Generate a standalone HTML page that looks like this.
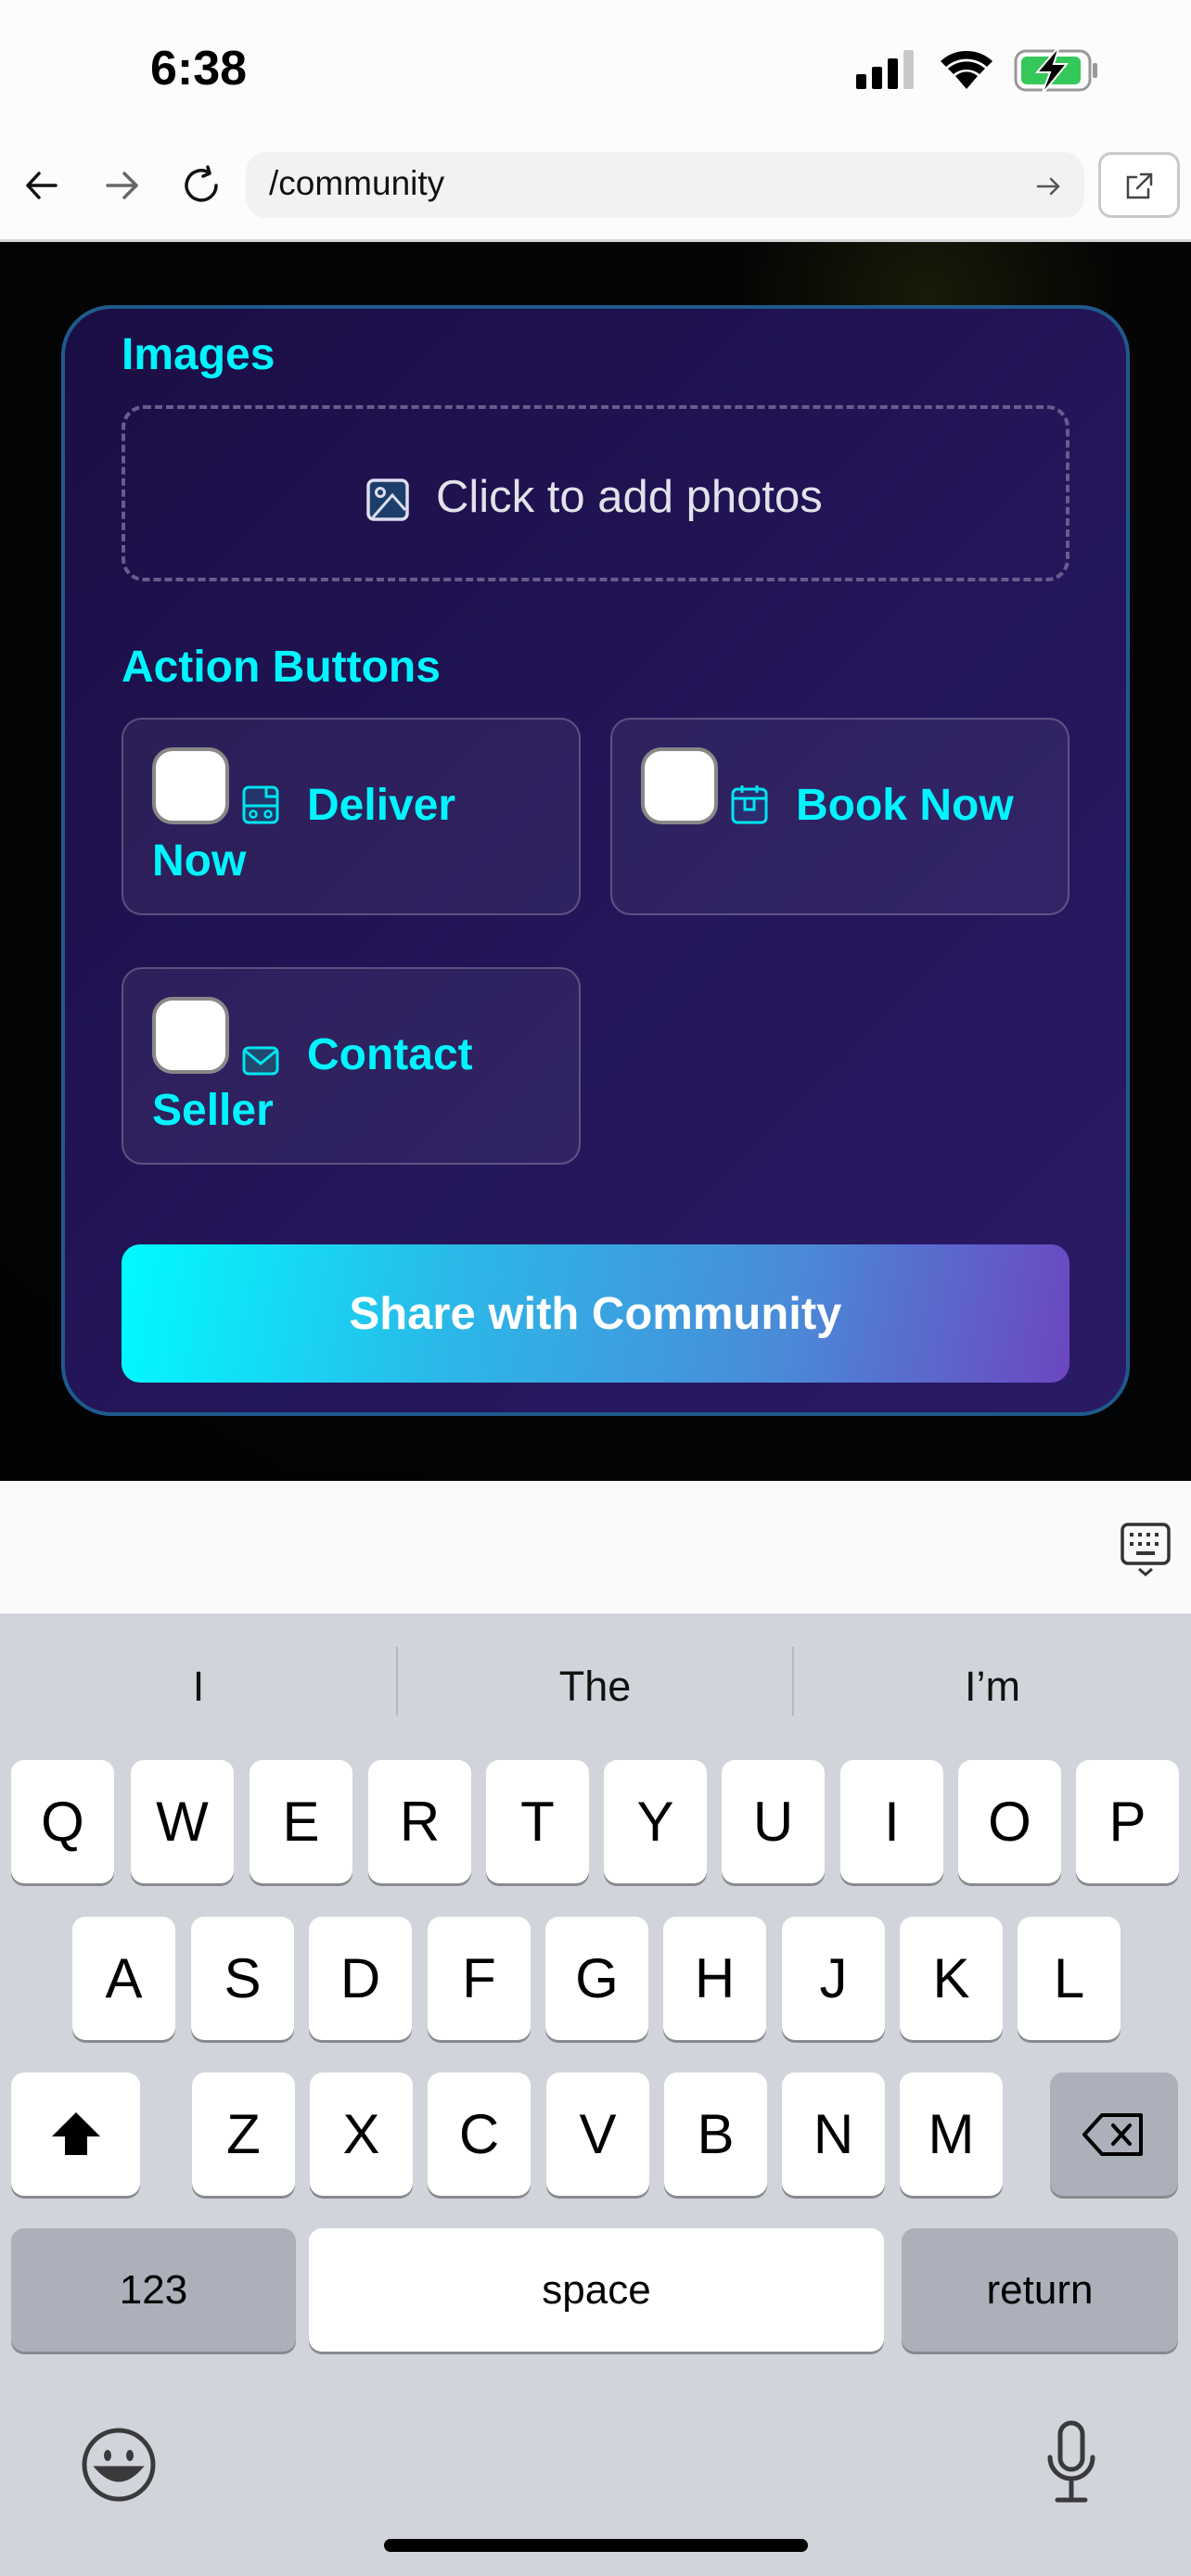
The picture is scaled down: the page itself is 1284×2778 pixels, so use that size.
<!DOCTYPE html>
<html><head><meta charset="utf-8"><style>
*{margin:0;padding:0;box-sizing:border-box}
body{width:1284px;height:2778px;position:relative;overflow:hidden;font-family:"Liberation Sans",sans-serif;background:#fcfcfc}
.a{position:absolute}
.key{position:absolute;background:#fff;border-radius:14px;box-shadow:0 3px 0 #898a8e;display:flex;align-items:center;justify-content:center;font-size:60px;color:#000;height:133px;width:111px}
.dk{background:#abb0ba}
.card{left:66px;top:329px;width:1152px;height:1198px;border:4px solid #1f5a8c;border-radius:54px;background:linear-gradient(135deg,#1b0e44 0%,#231557 50%,#2a1a66 100%)}
.cy{color:#00f5ff;font-weight:bold}
.btn{position:absolute;border:2px solid rgba(255,255,255,0.22);border-radius:22px;background:rgba(255,255,255,0.06);width:495px;height:213px}
.cb{position:absolute;left:31px;top:30px;width:83px;height:83px;background:#fff;border:4px solid #888;border-radius:22px}
.bt{position:absolute;font-size:48px;font-weight:bold;color:#00f5ff;line-height:60px}
</style></head><body>
<!-- status -->
<div class="a" style="left:162px;top:44px;font-size:52px;font-weight:bold;color:#000">6:38</div>
<svg class="a" style="left:920px;top:50px" width="280" height="52" viewBox="0 0 280 52">
<rect x="3" y="30" width="11" height="16" rx="2" fill="#000"/><rect x="20" y="22" width="11" height="24" rx="2" fill="#000"/><rect x="37" y="13" width="11" height="33" rx="2" fill="#000"/><rect x="54" y="4" width="11" height="42" rx="2" fill="#c8c8c8"/>
<path d="M122 46 L110 32 A18 18 0 0 1 134 32 Z" fill="#000"/><path d="M102 24 A30 30 0 0 1 142 24 L136 30 A22 22 0 0 0 108 30 Z" fill="#000"/><path d="M94 16 A41 41 0 0 1 150 16 L144 22 A33 33 0 0 0 100 22 Z" fill="#000"/>
<rect x="175" y="5" width="80" height="42" rx="11" fill="none" stroke="#999" stroke-width="3"/><rect x="181" y="11" width="64" height="30" rx="6" fill="#34c759"/><rect x="258" y="18" width="5" height="16" rx="2" fill="#999"/>
<path d="M222 0 L198 28 L212 28 L203 52 L230 19 L216 19 Z" fill="#000" stroke="#fcfcfc" stroke-width="2"/>
</svg>
<!-- browser bar -->
<svg class="a" style="left:20px;top:178px" width="230" height="44" viewBox="0 0 230 44" fill="none" stroke-width="3.5" stroke-linecap="round" stroke-linejoin="round">
<path d="M40 22 H12 M22 9 L10 22 L22 35" stroke="#111"/>
<path d="M96 22 H126 M114 9 L127 22 L114 35" stroke="#666"/>
<path d="M213 22 A16 16 0 1 1 205 8 M204 2 L206 9 L199 12" stroke="#111"/>
</svg>
<div class="a" style="left:265px;top:164px;width:904px;height:71px;background:#f1f2f4;border-radius:22px"></div>
<div class="a" style="left:290px;top:177px;font-size:37px;color:#111">/community</div>
<svg class="a" style="left:1115px;top:187px" width="30" height="28" viewBox="0 0 30 28" fill="none" stroke="#555" stroke-width="2.5" stroke-linecap="round"><path d="M4 14 H26 M18 6 L26 14 L18 22"/></svg>
<div class="a" style="left:1184px;top:164px;width:88px;height:71px;border:3px solid #c9c9c9;border-radius:14px;background:#fff"></div>
<svg class="a" style="left:1210px;top:183px" width="36" height="36" viewBox="0 0 36 36" fill="none" stroke="#444" stroke-width="2.5" stroke-linecap="round"><path d="M15 8 H6 V30 H28 V21 M20 5 H31 V16 M31 5 L16 20"/></svg>
<div class="a" style="left:0;top:258px;width:1284px;height:3px;background:#d6d6d6"></div>
<!-- page -->
<div class="a" style="left:0;top:261px;width:1284px;height:1336px;background:radial-gradient(circle at 1000px 60px,#1a1a08 0,#050505 200px,#020305 100%)"></div>
<div class="a card">
 <div class="a cy" style="left:61px;top:22px;font-size:48px">Images</div>
 <div class="a" style="left:61px;top:104px;width:1022px;height:190px;border:4px dashed #675c8c;border-radius:24px"></div>
 <svg class="a" style="left:325px;top:183px" width="46" height="46" viewBox="0 0 46 46"><rect x="2" y="2" width="42" height="42" rx="6" fill="#1d3d6a" stroke="#dde" stroke-width="3.5"/><circle cx="15" cy="15" r="4.5" fill="none" stroke="#dde" stroke-width="3"/><path d="M7 42 L28 18 L42 34" fill="none" stroke="#dde" stroke-width="3"/></svg>
 <div class="a" style="left:400px;top:175px;font-size:49px;color:#e2e2ea">Click to add photos</div>
 <div class="a cy" style="left:61px;top:359px;font-size:48px">Action Buttons</div>
 <div class="btn" style="left:61px;top:441px"><div class="cb"></div>
  <svg class="a" style="left:128px;top:71px" width="40" height="42" viewBox="0 0 40 42"><rect x="2" y="2" width="36" height="38" rx="5" fill="#23356a" stroke="#00e5f0" stroke-width="3"/><path d="M2 22 H38 M26 2 V12 H38" fill="none" stroke="#00e5f0" stroke-width="3"/><circle cx="12" cy="31" r="3.5" fill="none" stroke="#00e5f0" stroke-width="2.5"/><circle cx="28" cy="31" r="3.5" fill="none" stroke="#00e5f0" stroke-width="2.5"/></svg>
  <div class="bt" style="left:198px;top:63px">Deliver</div><div class="bt" style="left:31px;top:123px">Now</div></div>
 <div class="btn" style="left:588px;top:441px"><div class="cb"></div>
  <svg class="a" style="left:128px;top:71px" width="40" height="42" viewBox="0 0 40 42"><rect x="2" y="4" width="36" height="36" rx="5" fill="#2c2d70" stroke="#00e5f0" stroke-width="3"/><path d="M2 14 H38 M12 0 V8 M28 0 V8 M15 14 V26 H25 V14" fill="none" stroke="#00e5f0" stroke-width="3"/></svg>
  <div class="bt" style="left:198px;top:63px">Book Now</div></div>
 <div class="btn" style="left:61px;top:710px"><div class="cb"></div>
  <svg class="a" style="left:128px;top:83px" width="40" height="32" viewBox="0 0 40 32"><rect x="2" y="2" width="36" height="28" rx="5" fill="#23486e" stroke="#00e5f0" stroke-width="3"/><path d="M3 5 L20 19 L37 5" fill="none" stroke="#00e5f0" stroke-width="3"/></svg>
  <div class="bt" style="left:198px;top:63px">Contact</div><div class="bt" style="left:31px;top:123px">Seller</div></div>
 <div class="a" style="left:61px;top:1009px;width:1022px;height:149px;border-radius:20px;background:linear-gradient(100deg,#00fbff 0%,#2bb8e8 35%,#4a8ad8 70%,#6c46c0 100%);display:flex;align-items:center;justify-content:center;color:#fff;font-weight:bold;font-size:49px">Share with Community</div>
</div>
<!-- accessory bar -->
<div class="a" style="left:0;top:1597px;width:1284px;height:143px;background:#fafafa"></div>
<svg class="a" style="left:1208px;top:1642px" width="54" height="60" viewBox="0 0 54 60" fill="none" stroke="#333" stroke-width="3.5"><rect x="2" y="2" width="50" height="42" rx="6"/><path d="M10 13h4m5 0h4m5 0h4m5 0h4M10 23h4m5 0h4m5 0h4m5 0h4M17 33h20" stroke-width="4"/><path d="M20 50 L27 56 L34 50" stroke-width="3"/></svg>
<!-- keyboard -->
<div class="a" style="left:0;top:1740px;width:1284px;height:1038px;background:#d1d4db"></div>
<div class="a" style="left:0;top:1793px;width:428px;text-align:center;font-size:45px;color:#111">I</div>
<div class="a" style="left:427px;top:1776px;width:2px;height:74px;background:#b5b8bf"></div>
<div class="a" style="left:428px;top:1793px;width:427px;text-align:center;font-size:45px;color:#111">The</div>
<div class="a" style="left:854px;top:1776px;width:2px;height:74px;background:#b5b8bf"></div>
<div class="a" style="left:856px;top:1793px;width:428px;text-align:center;font-size:45px;color:#111">I’m</div>

<div class="key" style="left:12px;top:1898px">Q</div><div class="key" style="left:141px;top:1898px">W</div><div class="key" style="left:269px;top:1898px">E</div><div class="key" style="left:397px;top:1898px">R</div><div class="key" style="left:524px;top:1898px">T</div><div class="key" style="left:651px;top:1898px">Y</div><div class="key" style="left:778px;top:1898px">U</div><div class="key" style="left:906px;top:1898px">I</div><div class="key" style="left:1033px;top:1898px">O</div><div class="key" style="left:1160px;top:1898px">P</div>

<div class="key" style="left:78px;top:2067px">A</div><div class="key" style="left:206px;top:2067px">S</div><div class="key" style="left:333px;top:2067px">D</div><div class="key" style="left:461px;top:2067px">F</div><div class="key" style="left:588px;top:2067px">G</div><div class="key" style="left:715px;top:2067px">H</div><div class="key" style="left:843px;top:2067px">J</div><div class="key" style="left:970px;top:2067px">K</div><div class="key" style="left:1097px;top:2067px">L</div>

<div class="key" style="left:12px;top:2235px;width:139px"><svg width="60" height="56" viewBox="0 0 60 56"><path d="M30 4 L56 30 H42 V50 H18 V30 H4 Z" fill="#000"/></svg></div>
<div class="key" style="left:207px;top:2235px">Z</div><div class="key" style="left:334px;top:2235px">X</div><div class="key" style="left:461px;top:2235px">C</div><div class="key" style="left:589px;top:2235px">V</div><div class="key" style="left:716px;top:2235px">B</div><div class="key" style="left:843px;top:2235px">N</div><div class="key" style="left:970px;top:2235px">M</div>
<div class="key dk" style="left:1132px;top:2235px;width:138px"><svg width="70" height="48" viewBox="0 0 70 48" fill="none" stroke="#000" stroke-width="4" stroke-linejoin="round" stroke-linecap="round"><path d="M22 3 H64 V45 H22 L3 24 Z"/><path d="M34 14 L52 34 M52 14 L34 34"/></svg></div>

<div class="key dk" style="left:12px;top:2403px;width:307px;font-size:44px">123</div>
<div class="key" style="left:333px;top:2403px;width:620px;font-size:44px">space</div>
<div class="key dk" style="left:972px;top:2403px;width:298px;font-size:44px">return</div>

<svg class="a" style="left:86px;top:2616px" width="84" height="84" viewBox="0 0 84 84" fill="none" stroke="#3a3a3c" stroke-width="5"><circle cx="42" cy="42" r="37"/><ellipse cx="30" cy="32" rx="4" ry="6" fill="#3a3a3c" stroke="none"/><ellipse cx="54" cy="32" rx="4" ry="6" fill="#3a3a3c" stroke="none"/><path d="M20 46 Q42 70 64 46 Z" fill="#3a3a3c"/></svg>
<svg class="a" style="left:1126px;top:2610px" width="58" height="92" viewBox="0 0 58 92" fill="none" stroke="#3a3a3c" stroke-width="5" stroke-linecap="round"><rect x="17" y="3" width="24" height="50" rx="12"/><path d="M6 40 A23 23 0 0 0 52 40 M29 64 V84 M14 86 H44"/></svg>
<div class="a" style="left:414px;top:2738px;width:457px;height:14px;border-radius:7px;background:#000"></div>
</body></html>
